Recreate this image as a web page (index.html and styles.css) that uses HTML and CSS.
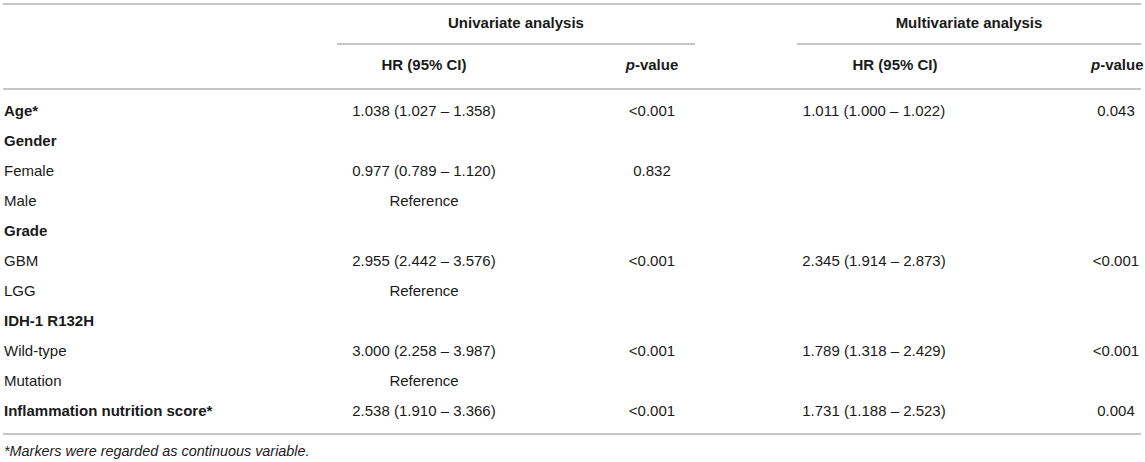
FILE: index.html
```html
<!DOCTYPE html>
<html>
<head>
<meta charset="utf-8">
<link rel="stylesheet" href="styles.css">
</head>
<body>
<div class="table">
  <div class="row group-row">
    <div></div>
    <div class="group uni">Univariate analysis</div>
    <div class="group multi">Multivariate analysis</div>
  </div>
  <div class="row head-row">
    <div></div>
    <div class="c">HR (95% CI)</div>
    <div class="c"><i>p</i>-value</div>
    <div class="c hr2">HR (95% CI)</div>
    <div class="c p2"><i>p</i>-value</div>
  </div>
  <div class="body">
    <div class="row"><div class="lbl b">Age*</div><div class="c">1.038 (1.027 – 1.358)</div><div class="c">&lt;0.001</div><div class="c">1.011 (1.000 – 1.022)</div><div class="c p2">0.043</div></div>
    <div class="row"><div class="lbl b">Gender</div><div></div><div></div><div></div><div></div></div>
    <div class="row"><div class="lbl">Female</div><div class="c">0.977 (0.789 – 1.120)</div><div class="c">0.832</div><div></div><div></div></div>
    <div class="row"><div class="lbl">Male</div><div class="c">Reference</div><div></div><div></div><div></div></div>
    <div class="row"><div class="lbl b">Grade</div><div></div><div></div><div></div><div></div></div>
    <div class="row"><div class="lbl">GBM</div><div class="c">2.955 (2.442 – 3.576)</div><div class="c">&lt;0.001</div><div class="c">2.345 (1.914 – 2.873)</div><div class="c p2">&lt;0.001</div></div>
    <div class="row"><div class="lbl">LGG</div><div class="c">Reference</div><div></div><div></div><div></div></div>
    <div class="row"><div class="lbl b">IDH-1 R132H</div><div></div><div></div><div></div><div></div></div>
    <div class="row"><div class="lbl">Wild-type</div><div class="c">3.000 (2.258 – 3.987)</div><div class="c">&lt;0.001</div><div class="c">1.789 (1.318 – 2.429)</div><div class="c p2">&lt;0.001</div></div>
    <div class="row"><div class="lbl">Mutation</div><div class="c">Reference</div><div></div><div></div><div></div></div>
    <div class="row"><div class="lbl b">Inflammation nutrition score*</div><div class="c">2.538 (1.910 – 3.366)</div><div class="c">&lt;0.001</div><div class="c">1.731 (1.188 – 2.523)</div><div class="c p2">0.004</div></div>
  </div>
  <div class="foot">*Markers were regarded as continuous variable.</div>
</div>
</body>
</html>
```

FILE: styles.css
```css
html, body {
  margin: 0;
  padding: 0;
  background: #ffffff;
}
body {
  font-family: "Liberation Sans", Arial, sans-serif;
  font-size: 15px;
  color: #1a1a1a;
}
.table {
  width: 1138px;
  margin: 3px 0 0 3px;
  border-top: 2px solid #c6c6c6;
}
.row {
  display: grid;
  grid-template-columns: 334px 174px 282px 162px 186px;
  line-height: 30px;
  white-space: nowrap;
}
.group-row {
  padding-top: 3px;
}
.group {
  font-weight: bold;
  text-align: center;
  padding-bottom: 5px;
  border-bottom: 2px solid #c6c6c6;
}
.group.uni {
  grid-column: 2 / 4;
  margin-right: 98px;
}
.group.multi {
  grid-column: 4 / 6;
  margin-left: 4px;
}
.head-row {
  padding-top: 5px;
  padding-bottom: 8px;
  border-bottom: 2px solid #c6c6c6;
  font-weight: bold;
}
.c {
  text-align: center;
}
.hr2 {
  padding-left: 42px;
}
.p2 {
  padding-left: 136px;
}
.body {
  padding-top: 6px;
  padding-bottom: 7px;
  border-bottom: 2px solid #c6c6c6;
}
.lbl {
  padding-left: 1px;
}
.b {
  font-weight: bold;
}
.foot {
  margin-top: 6px;
  padding-left: 1px;
  font-size: 14.4px;
  line-height: 20px;
  font-style: italic;
}
```
